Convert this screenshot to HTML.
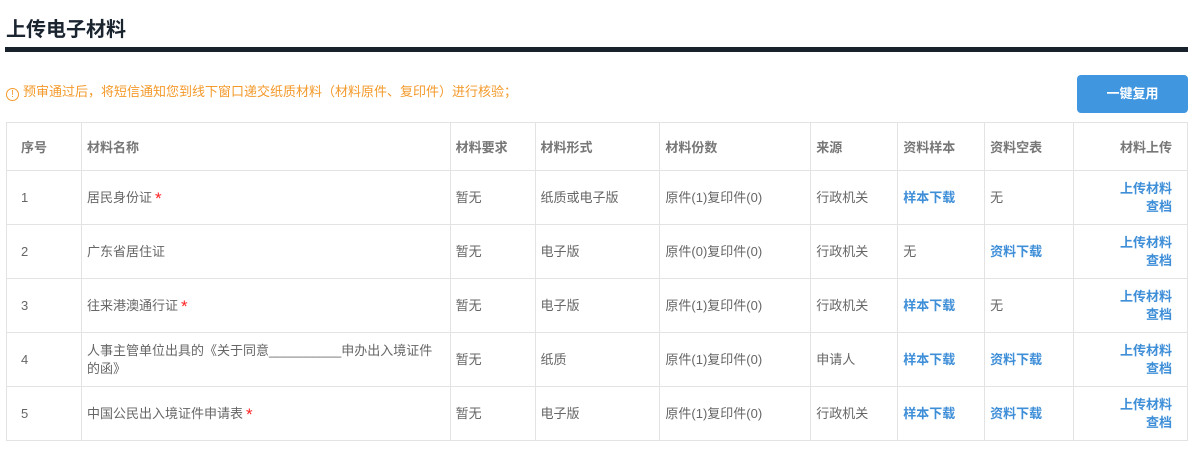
<!DOCTYPE html>
<html><head><meta charset="utf-8"><style>
*{margin:0;padding:0;box-sizing:border-box}
body{width:1200px;height:472px;background:#fff;font-family:"Liberation Sans","Noto Sans CJK SC",sans-serif;position:relative;overflow:hidden}
.t{position:absolute;left:6px;top:13px;font-size:20px;font-weight:bold;color:#1b2530}
.bar{position:absolute;left:5px;top:47px;width:1183px;height:5px;background:#17222d}
.n{position:absolute;left:6px;top:81px;font-size:13px;color:#f39a2b}
.n i{display:inline-block;width:13px;height:13px;border:1px solid #f39a2b;border-radius:50%;font-style:normal;font-size:10px;line-height:11px;text-align:center;vertical-align:-1px;margin-right:4px}
.btn{position:absolute;left:1077px;top:75px;width:111px;height:38px;background:#4196e0;border-radius:4px;color:#fff;font-size:13px;font-weight:bold;text-align:center;line-height:38px}
table{position:absolute;left:6px;top:122px;width:1182px;border-collapse:collapse;font-size:13px;color:#666}
td,th{border:1px solid #e3e3e3;padding:0 5px;text-align:left;vertical-align:middle}
th{height:48px;font-weight:bold;color:#777}
td{height:54px;line-height:18px}
td:first-child,th:first-child{padding-left:14px}
td:last-child,th:last-child{text-align:right;padding-right:15px}
.b{color:#3f8fd8;font-weight:bold}
.s{color:#f22;font-size:17px;margin-left:3px;vertical-align:-2px;line-height:10px}
</style></head><body>
<div class="t">上传电子材料</div>
<div class="bar"></div>
<div class="n"><i>!</i>预审通过后，将短信通知您到线下窗口递交纸质材料（材料原件、复印件）进行核验；</div>
<div class="btn">一键复用</div>
<table>
<colgroup><col style="width:75px"><col style="width:369px"><col style="width:85px"><col style="width:125px"><col style="width:151px"><col style="width:87px"><col style="width:87px"><col style="width:89px"><col style="width:114px"></colgroup>
<tr><th>序号</th><th>材料名称</th><th>材料要求</th><th>材料形式</th><th>材料份数</th><th>来源</th><th>资料样本</th><th>资料空表</th><th>材料上传</th></tr>
<tr><td>1</td><td>居民身份证<span class="s">*</span></td><td>暂无</td><td>纸质或电子版</td><td>原件(1)复印件(0)</td><td>行政机关</td><td class="b">样本下载</td><td>无</td><td class="b">上传材料<br>查档</td></tr>
<tr><td>2</td><td>广东省居住证</td><td>暂无</td><td>电子版</td><td>原件(0)复印件(0)</td><td>行政机关</td><td>无</td><td class="b">资料下载</td><td class="b">上传材料<br>查档</td></tr>
<tr><td>3</td><td>往来港澳通行证<span class="s">*</span></td><td>暂无</td><td>电子版</td><td>原件(1)复印件(0)</td><td>行政机关</td><td class="b">样本下载</td><td>无</td><td class="b">上传材料<br>查档</td></tr>
<tr><td>4</td><td>人事主管单位出具的《关于同意__________申办出入境证件的函》</td><td>暂无</td><td>纸质</td><td>原件(1)复印件(0)</td><td>申请人</td><td class="b">样本下载</td><td class="b">资料下载</td><td class="b">上传材料<br>查档</td></tr>
<tr><td>5</td><td>中国公民出入境证件申请表<span class="s">*</span></td><td>暂无</td><td>电子版</td><td>原件(1)复印件(0)</td><td>行政机关</td><td class="b">样本下载</td><td class="b">资料下载</td><td class="b">上传材料<br>查档</td></tr>
</table>
</body></html>
